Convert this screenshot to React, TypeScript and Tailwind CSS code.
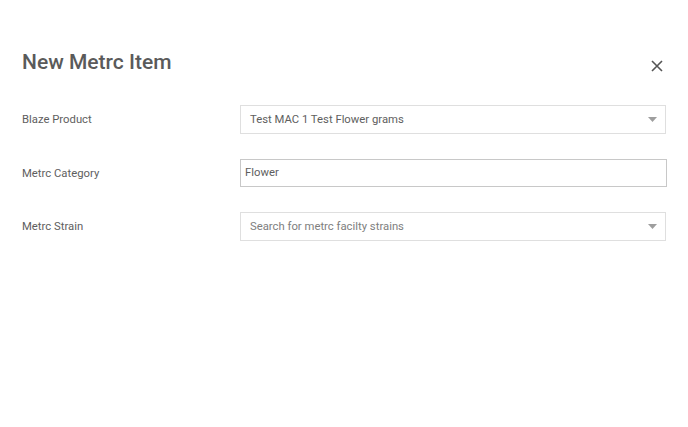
import React from 'react';

const Caret = () => (
  <svg width="9" height="5" viewBox="0 0 9 5" className="shrink-0">
    <path d="M0 0h9L4.5 5z" fill="#9e9e9e" />
  </svg>
);

const Row = ({ label, children }: { label: string; children: React.ReactNode }) => (
  <div className="flex items-center">
    <div className="w-[218px] shrink-0 pt-[2px] text-[11.3px] text-[#5e5e5e]">{label}</div>
    <div className="flex-1">{children}</div>
  </div>
);

export default function App() {
  return (
    <div
      className="w-[688px] h-[427px] bg-white px-[22px] pt-[48px]"
      style={{ fontFamily: 'Roboto, "Liberation Sans", sans-serif' }}
    >
      <div className="flex items-center justify-between h-[28px]">
        <h1 className="text-[21px] font-medium text-[#5a5a5a] leading-[28px]">New Metrc Item</h1>
        <button className="w-[16px] h-[16px] flex items-center justify-center mr-[1px] mt-[8px]">
          <svg width="12" height="12" viewBox="0 0 12 12">
            <path d="M1 1l10 10M11 1L1 11" stroke="#555" strokeWidth="1.6" />
          </svg>
        </button>
      </div>

      <div className="mt-[29px] flex flex-col gap-[25px]">
        <Row label="Blaze Product">
          <div className="h-[29px] border border-[#dfdfdf] flex items-center justify-between pl-[9px] pr-[8px] text-[11.3px] text-[#5e5e5e]">
            <span className="pt-[2px]">Test MAC 1 Test Flower grams</span>
            <Caret />
          </div>
        </Row>
        <Row label="Metrc Category">
          <div className="h-[28px] border border-[#c8c8c8] flex items-center pl-[4px] text-[11.3px] text-[#5e5e5e] mr-[-1px]">
            <span className="pt-[1px]">Flower</span>
          </div>
        </Row>
        <Row label="Metrc Strain">
          <div className="h-[29px] border border-[#dfdfdf] flex items-center justify-between pl-[9px] pr-[8px] text-[11.3px] text-[#7e7e7e]">
            <span className="pt-[2px]">Search for metrc facilty strains</span>
            <Caret />
          </div>
        </Row>
      </div>
    </div>
  );
}
